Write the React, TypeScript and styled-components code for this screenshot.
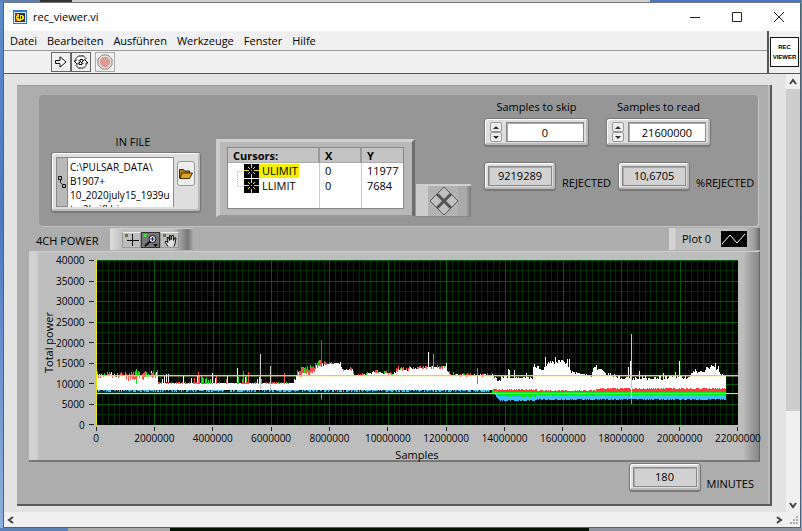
import React from "react";
import styled, { createGlobalStyle } from "styled-components";

const GlobalStyle = createGlobalStyle`
  * { box-sizing: border-box; }
  body { margin: 0; font-family: "Open Sans", "Noto Sans", sans-serif; font-size: 11px; line-height: 14px; color: #000; }
  button, input, textarea { font: inherit; color: inherit; margin: 0; padding: 0; border: 0; border-radius: 0; background: none; }
`;

const Desktop = styled.div`
  display: flex;
  flex-direction: column;
  min-height: 100vh;
  padding: 2px 1px 0 3px;
  background:
    linear-gradient(90deg, #5b81bb 0 5%, #333 5% 9%, #d0d0d0 9% 81%, #4a78c0 81%) 0 0 / 100% 2px no-repeat,
    linear-gradient(#5f8ccb, #4a78c0 40%, #8fb0da);
`;
const Window = styled.main`
  display: flex;
  flex-direction: column;
  flex: 1;
  background: #f0f0f0;
  border: 1px solid #55606e;
  border-top-color: #777;
`;
const Behind = styled.div`
  display: grid;
  grid-template-columns: 68px 102px 1fr 213px;
  height: 3px;
  margin: 0 -1px 0 -3px;
  & > :nth-child(1) { background: #5b81bb; }
  & > :nth-child(2) { background: #aaa; }
  & > :nth-child(3) { background: #031203; }
  & > :nth-child(4) { background: #8d93a0; }
`;
const TitleBar = styled.header`
  display: flex;
  align-items: center;
  height: 28px;
  padding-left: 9px;
  background: #fff;
`;
const Title = styled.h1`
  flex: 1;
  margin: 0 0 0 6px;
  font-size: 11px;
  font-weight: 400;
`;
const Caption = styled.button`
  display: grid;
  place-items: center;
  width: 42px;
  height: 28px;
`;
const Bars = styled.div`
  display: flex;
  border-bottom: 1px solid #555;
`;
const BarStack = styled.div`
  flex: 1;
`;
const MenuBar = styled.nav`
  display: flex;
  align-items: center;
  gap: 10px;
  height: 20px;
  padding-left: 6px;
  border-bottom: 1px solid #999;
`;
const MenuItem = styled.button`
  line-height: 16px;
`;
const Toolbar = styled.div`
  display: flex;
  align-items: center;
  height: 22px;
  padding-left: 47px;
`;
const ToolButton = styled.button<{ $faded?: boolean }>`
  display: grid;
  place-items: center;
  width: 20px;
  height: 20px;
  border: 1px solid ${(p) => (p.$faded ? "#aaa" : "#666")};
  margin-left: ${(p) => (p.$faded ? "4px" : "0")};
  & + & { border-left-width: ${(p) => (p.$faded ? "1px" : "0")}; }
`;
const IconPane = styled.div`
  display: grid;
  place-items: center;
  width: 33px;
  border-left: 2px solid #555;
`;
const ViIcon = styled.div`
  display: flex;
  flex-direction: column;
  align-items: center;
  width: 29px;
  height: 30px;
  padding-top: 4px;
  border: 1px solid #111;
  background: #fff;
  font: bold 6px/10px "Liberation Sans", sans-serif;
`;
const Viewport = styled.div`
  display: flex;
  flex: 1;
`;
const Page = styled.div`
  display: flex;
  flex: 1;
  min-width: 0;
  padding: 11px 14px 6px 13px;
  background: #e3e3e3;
`;
const FrontPanel = styled.section`
  flex: 1;
  min-width: 0;
  padding: 10px 10px 9px 12px;
  background: #adadad;
  border: solid #5c585c;
  border-width: 0 2px 2px 0;
  box-shadow: inset -2px 0 #bbb, inset 0 1px #999;
`;
const Group = styled.section`
  display: flex;
  align-items: flex-end;
  height: 131px;
  margin: 0 2px 0 10px;
  padding: 0 0 9px 12px;
  border-radius: 4px;
  background: #969696;
  box-shadow: 1px 1px #c2c2c2;
`;
const Bezel = styled.div`
  display: flex;
  background: #dedede;
  border: 1px solid #777;
  border-radius: 3px;
  box-shadow: inset 1px 1px #fff, inset -2px -2px #bbb, 0 1px 1px #777;
`;
const FileColumn = styled.div`
  display: flex;
  flex-direction: column;
  width: 150px;
  margin-bottom: 5px;
`;
const FieldLabel = styled.label`
  text-align: center;
`;
const FileLabel = styled(FieldLabel)`
  padding-left: 14px;
`;
const FileBezel = styled(Bezel)`
  height: 60px;
  margin-top: 3px;
  padding: 4px;
`;
const PathGrip = styled.span`
  display: grid;
  place-items: center;
  width: 12px;
  border: 1px solid #888;
  background: #b9b9b9;
`;
const PathBox = styled.textarea`
  width: 106px;
  height: 50px;
  padding: 2px 0 0 2px;
  border: solid #888;
  border-width: 1px 1px 0 0;
  background: #fff;
  font-size: 10px;
  white-space: pre;
  resize: none;
  overflow: hidden;
`;
const Browse = styled.button`
  display: grid;
  place-items: center;
  width: 18px;
  height: 25px;
  margin: 4px 0 0 3px;
  border: 1px solid #999;
  border-radius: 3px;
  background: #eee;
`;
const Legend = styled.div`
  width: 199px;
  height: 78px;
  margin-left: 15px;
  padding: 5px 8px 6px 7px;
  background: #b8b8b8;
  border: solid;
  border-width: 3px 3px 2px 4px;
  border-color: #d0d0d0 #6c6c6c #9a9a9a #cdcdcd;
`;
const CursorTable = styled.table`
  width: 100%;
  height: 61px;
  border-spacing: 0;
  table-layout: fixed;
  background: #fff;
  border: 1px solid #888;
  th {
    height: 15px;
    padding: 0 0 0 5px;
    text-align: left;
    background: #c4c4c4;
    border-right: 2px solid #999;
    border-bottom: 1px solid #aaa;
    line-height: 13px;
  }
  td { height: 15px; padding: 0 0 0 5px; line-height: 14px; border-right: 1px solid #ccc; }
  td:last-child, th:last-child { border-right: 0; }
  td:first-child { padding-left: 8px; }
`;
const CursorName = styled.div<{ $selected?: boolean }>`
  display: flex;
  align-items: center;
  height: 14px;
  span { padding: 0 1px 0 3px; background: ${(p) => (p.$selected ? "#f4f000" : "none")}; }
`;
const Mover = styled.button`
  display: grid;
  place-items: center;
  width: 55px;
  height: 33px;
  margin-left: 1px;
  background: linear-gradient(90deg, #ccc 0 12px, #b2b2b2 12px 42px, #aaa 42px 50px, #777);
  border-top: 2px solid #d0d0d0;
  border-bottom: 1px solid #888;
`;
const Numbers = styled.div`
  display: flex;
  flex-direction: column;
  gap: 16px;
  margin: 0 0 27px 13px;
`;
const NumberRow = styled.div<{ $gap: number }>`
  display: flex;
  gap: ${(p) => p.$gap}px;
`;
const NumberField = styled.div`
  display: flex;
  flex-direction: column;
  gap: 4px;
  width: 105px;
`;
const NumberBezel = styled(Bezel)`
  height: 28px;
  padding: 3px 4px;
  align-items: center;
`;
const Spinner = styled.div`
  display: flex;
  flex-direction: column;
  width: 12px;
  margin: 0 4px 0 1px;
`;
const SpinButton = styled.button`
  display: grid;
  place-items: center;
  width: 12px;
  height: 10px;
  border: 1px solid #999;
  border-radius: 2px;
  background: #eee;
`;
const NumberInput = styled.input`
  flex: 1;
  min-width: 0;
  height: 20px;
  border: 1px solid #888;
  box-shadow: inset 1px 1px #aaa;
  background: #fff;
  text-align: center;
`;
const Labelled = styled.div`
  display: flex;
  align-items: flex-end;
  gap: 6px;
`;
const ReadBezel = styled(Bezel)`
  width: 72px;
  height: 28px;
  padding: 3px;
`;
const ReadValue = styled.output`
  flex: 1;
  border: 1px solid #888;
  box-shadow: inset 1px 1px #aaa;
  background: #d2d2d2;
  line-height: 18px;
  text-align: center;
`;
const GraphHeader = styled.div`
  display: flex;
  align-items: flex-end;
  height: 24px;
  padding-left: 7px;
`;
const TitleSlot = styled.div`
  width: 74px;
`;
const GraphTitle = styled.h2`
  margin: 0;
  font-size: 11px;
  font-weight: 400;
  line-height: 18px;
`;
const Palette = styled.div`
  display: flex;
  width: 83px;
  height: 22px;
  margin-right: auto;
  padding: 3px 0 0 12px;
  background: linear-gradient(90deg, #ddd, #c0c0c0 12px 64px, #777 78px, #aaa);
  border-top: 1px solid #ccc;
`;
const PaletteButton = styled.button<{ $active?: boolean }>`
  display: grid;
  place-items: center;
  width: 19px;
  height: 16px;
  border: 1px solid ${(p) => (p.$active ? "#333" : "#999")};
  border-top-color: ${(p) => (p.$active ? "#333" : "#eee")};
  background: ${(p) => (p.$active ? "#777" : "#bebebe")};
`;
const PlotLegend = styled.div`
  display: flex;
  align-items: center;
  gap: 10px;
  width: 91px;
  height: 22px;
  padding-left: 13px;
  background: linear-gradient(90deg, #d4d4d4 6px, #bfbfbf 7px 76px, #999 86px, #666);
`;
const Graph = styled.div`
  display: grid;
  grid-template-columns: 13px 42px 12px 1fr;
  grid-template-rows: 165px 35px;
  margin-top: 1px;
  padding: 8px 21px 0 0;
  border: solid;
  border-width: 1px 1px 2px 0;
  border-color: #d0d0d0 #666 #777 #ccc;
  background: linear-gradient(90deg, #d2d2d2 0 7px, #bdbdbd 11px, #bdbdbd calc(100% - 16px), #929292 calc(100% - 4px), #888);
`;
const YAxis = styled.div`
  grid-column: 2;
  display: grid;
  grid-template-columns: 14px 1fr;
`;
const YTitle = styled.div`
  writing-mode: vertical-rl;
  transform: rotate(180deg);
  text-align: center;
  line-height: 14px;
  justify-self: end;
`;
const YLabels = styled.div`
  display: flex;
  flex-direction: column;
  justify-content: space-between;
  align-items: flex-end;
  font-size: 10px;
  span { display: flex; align-items: center; height: 0; }
`;
const YMarks = styled.div`
  display: flex;
  flex-direction: column;
  justify-content: space-between;
  align-items: flex-end;
  padding-right: 2px;
  span { width: 5px; height: 1px; background: #222; }
`;
const XAxis = styled.div`
  grid-column: 4;
`;
const XLabels = styled.div`
  display: flex;
  justify-content: space-between;
  height: 23px;
  padding-top: 2px;
  font-size: 10px;
  span { display: flex; flex-direction: column; align-items: center; width: 0; }
  span::before { content: ""; width: 1px; height: 4px; flex: none; background: #222; }
`;
const XTitle = styled.div`
  text-align: center;
  line-height: 14px;
`;
const PlotArea = styled.svg`
  display: block;
  width: 100%;
  height: 165px;
  background: #000;
`;
const Footer = styled.div`
  display: flex;
  justify-content: flex-end;
  padding: 1px 6px 0 0;
`;
const VScroll = styled.div`
  display: flex;
  flex-direction: column;
  justify-content: space-between;
  width: 14px;
  background: #f0f0f0;
`;
const VThumb = styled.div`
  width: 14px;
  height: 322px;
  margin-bottom: auto;
  background: #cdcdcd;
`;
const HScroll = styled.div`
  display: flex;
  align-items: center;
  justify-content: space-between;
  height: 15px;
  background: #f0f0f0;
`;
const ScrollButton = styled.button`
  display: grid;
  place-items: center;
  width: 14px;
  height: 15px;
`;
const HEnd = styled.div`
  display: flex;
`;

function noise(seed: number) {
  let s = seed;
  return () => {
    s = (s * 16807) % 2147483647;
    return s / 2147483647;
  };
}

type Knot = [x: number, y: number, jitter: number];
const envelope: Knot[] = [
  [0, 115, 2], [40, 116, 2], [61, 114, 2], [62, 123, 0], [197, 123, 0], [201, 113, 2],
  [214, 110, 2], [222, 105, 2], [236, 103, 2], [244, 103, 1], [246, 110, 1], [256, 110, 1],
  [258, 115, 0], [266, 115, 0], [278, 112, 1], [296, 114, 1], [301, 110, 2], [315, 109, 2],
  [330, 107, 1], [349, 107, 1], [354, 115, 1], [396, 115, 1], [402, 119, 2], [410, 117, 2],
  [436, 118, 1], [437, 106, 2], [446, 108, 2], [451, 102, 3], [470, 102, 2], [475, 112, 2],
  [490, 115, 1], [495, 116, 1], [498, 107, 3], [504, 108, 3], [510, 114, 1], [524, 118, 2],
  [593, 118, 2], [598, 111, 2], [608, 111, 2], [614, 107, 3], [622, 107, 4], [624, 115, 1], [630, 116, 2],
];
const whiteSpikes: Record<number, number> = {
  0: 110, 15: 112, 55: 111, 66: 119, 68: 115, 70: 114, 72: 114, 87: 115, 95: 118, 101: 116, 116: 113, 119: 118,
  131: 115, 141: 108, 147: 115, 149: 117, 152: 116, 161: 119, 163: 117, 174: 106, 188: 115, 332: 92, 337: 100, 350: 103,
  381: 108, 412: 109, 413: 110, 418: 110, 430: 113, 471: 99, 473: 99, 532: 107, 535: 74, 534: 101, 543: 111,
  567: 113, 579: 112, 583: 101, 449: 97, 459: 97, 619: 103, 401: 121, 404: 121,
};

const rand = noise(4211);
const level = (knots: Knot[], x: number) => {
  const i = Math.max(1, knots.findIndex((k) => k[0] >= x));
  const [x0, y0] = knots[i - 1];
  const [x1, y1, j] = knots[i];
  return y0 + ((y1 - y0) * (x - x0)) / (x1 - x0) + (rand() - 0.5) * 2 * j;
};
const bar = (x: number, top: number, bottom: number) =>
  `M${x} ${Math.round(top)}h1V${Math.round(bottom)}h-1z`;

let white = "";
let red = "";
let green = "";
let cyan = "";
let lowRed = "";
let lowGreen = "";
let lowCyan = "";
for (let x = 0; x < 630; x++) {
  const y = level(envelope, x);
  const top = whiteSpikes[x] ?? y;
  white += bar(x, top, x > 396 ? 131 : 130);
  if (x < 396) {
    const busy = (x > 28 && x < 62) || (x > 200 && x < 225);
    const quiet = x > 62 && x < 197;
    if (rand() < (busy ? 0.7 : 0.3)) red += bar(x, y - (busy ? 2 : 1) * rand() - (quiet ? 0 : 1), y + (busy ? 3 : 1));
    if (rand() < (busy ? 0.4 : 0.15)) green += bar(x, y - (busy ? 4 : 1) * rand() - (quiet ? 0 : 1), y + 1);
    if (rand() < 0.7) cyan += bar(x, 130, rand() < 0.5 ? 131 : 132);
  } else {
    const t = Math.min(1, (x - 396) / 7);
    const r = x > 500 ? 128 : 129 + (x > 440 && x < 500 ? 1 : 0);
    lowRed += bar(x, r + Math.round(rand()), 132);
    lowGreen += bar(x, 132 - (1 - t) * 2, 132 + t * (x < 440 ? 4 : 3) + rand());
    lowCyan += bar(x, 132, 131 + t * (x < 440 ? 9 : 8) + rand());
  }
}
for (const [x, y] of [[98, 118], [102, 112], [103, 115], [105, 116], [107, 118], [120, 115], [130, 119], [147, 111], [152, 112], [188, 113], [381, 108]])
  red += bar(x, y, 124);
for (const [x, y] of [[40, 109], [106, 117], [109, 119], [110, 118], [112, 120], [114, 119], [146, 119], [150, 115], [142, 117], [165, 119]])
  green += bar(x, y, 124);
green += bar(337, 94, 106);

const majorX = Array.from({ length: 12 }, (_, i) => Math.round((i * 642) / 11));
const minorX = Array.from({ length: 110 }, (_, i) => Math.round((i * 642) / 110));
const majorY = Array.from({ length: 8 }, (_, i) => Math.round((i * 165) / 8));
const minorY = majorY.map((y) => y + 10);
const vLines = (xs: number[]) => xs.map((x) => `M${x} 0h1v165h-1z`).join("");
const hLines = (ys: number[]) => ys.map((y) => `M0 ${y}h642v1H0z`).join("");

const Waveform = () => (
  <PlotArea viewBox="0 0 642 165" preserveAspectRatio="none" shapeRendering="crispEdges" role="img" aria-label="Total power by sample">
    <path d={vLines(minorX) + hLines(minorY)} fill="#002c00" />
    <path d={vLines(majorX) + hLines(majorY)} fill="#005a0a" />
    <path d="M225 80h1v60h-1z" fill="#18a020" />
    <path d={white} fill="#fff" />
    <path d={green} fill="#18e818" />
    <path d={red} fill="#ff4848" />
    <path d="M164 94h1v36h-1zM174 106h1v24h-1zM535 74h1v60h-1z" fill="#c4ccc4" />
    <path d="M0 131h396v2H0z" fill="#10302c" />
    <path d={cyan + "M225 133h1v5h-1z"} fill="#42c0f4" />
    <path d={lowRed} fill="#ff3c3c" />
    <path d={lowCyan} fill="#38c0ff" />
    <path d={lowGreen + "M535 136h1v8h-1z"} fill="#00ee10" />
    <path d="M535 128h1v10h-1z" fill="#e8f0d0" />
    <path d="M0 115h642v1H0z" fill="#e0d820" />
    <path d="M0 116h642v1H0z" fill="#e8e480" opacity=".4" />
    <path d="M0 133h642v1H0zM0 0h1v165h-1z" fill="#e8e800" />
  </PlotArea>
);

const AppLogo = () => (
  <svg width="14" height="14" viewBox="0 0 14 14" shapeRendering="crispEdges">
    <path fill="#2a7bd0" d="M0 0h14v14H0z" />
    <path fill="#d8ecff" d="M1 2h12v11H1z" />
    <path fill="#334" d="M2 3h10v9H2z" />
    <path fill="#f4e020" d="M3 4h3v1h4v1h1v3h-1v1H8v1H3z" />
    <path fill="#d02818" d="M2 4h2v2H2zM4 7h3v1H4zM2 9h2v2H2z" />
    <path fill="#222" d="M6 5h1v4H6zM8 6h1v3H8z" />
  </svg>
);
const Chevron = ({ d }: { d: string }) => (
  <svg width="8" height="8" viewBox="0 0 8 8" fill="none" stroke="#444" strokeWidth="2"><path d={d} /></svg>
);
const CursorGlyph = () => (
  <svg width="15" height="14" viewBox="0 0 15 14" shapeRendering="crispEdges">
    <path fill="#000" d="M0 0h15v14H0z" />
    <path fill="#f4e400" d="M7 0h1v4H7zM7 10h1v4H7zM0 6h5v1H0zM10 6h5v1h-5zM5 4h1v1H5zM9 4h1v1H9zM5 8h1v1H5zM9 8h1v1H9zM4 3h1v1H4zM10 3h1v1h-1zM4 9h1v1H4zM10 9h1v1h-1zM7 6h1v1H7z" />
  </svg>
);
const Tree = ({ last }: { last?: boolean }) => (
  <svg width="8" height="14" viewBox="0 0 8 14" fill="none" stroke="#bbb" strokeDasharray="1 1" shapeRendering="crispEdges">
    <path d={last ? "M1.5 0V7.5H8" : "M8 7.5H1.5V14"} />
  </svg>
);

const Readout = ({ id, value, label }: { id: string; value: string; label: string }) => (
  <Labelled>
    <ReadBezel><ReadValue id={id}>{value}</ReadValue></ReadBezel>
    <label htmlFor={id}>{label}</label>
  </Labelled>
);
const NumberControl = ({ id, value, label }: { id: string; value: string; label: string }) => (
  <NumberField>
    <FieldLabel htmlFor={id}>{label}</FieldLabel>
    <NumberBezel>
      <Spinner>
        <SpinButton aria-label={`Increase ${label}`}><svg width="6" height="3" viewBox="0 0 6 3"><path d="M0 3 3 0l3 3z" fill="#333" /></svg></SpinButton>
        <SpinButton aria-label={`Decrease ${label}`}><svg width="6" height="3" viewBox="0 0 6 3"><path d="M0 0h6L3 3z" fill="#333" /></svg></SpinButton>
      </Spinner>
      <NumberInput id={id} defaultValue={value} inputMode="numeric" />
    </NumberBezel>
  </NumberField>
);

const menus = ["Datei", "Bearbeiten", "Ausführen", "Werkzeuge", "Fenster", "Hilfe"];
const cursors = [
  { name: "ULIMIT", x: "0", y: "11977" },
  { name: "LLIMIT", x: "0", y: "7684" },
];
const yTicks = [40000, 35000, 30000, 25000, 20000, 15000, 10000, 5000, 0];
const xTicks = Array.from({ length: 12 }, (_, i) => i * 2000000);

export default function App() {
  return (
    <Desktop>
      <GlobalStyle />
      <Window>
        <TitleBar>
          <AppLogo />
          <Title>rec_viewer.vi</Title>
          <Caption aria-label="Minimize"><svg width="10" height="10" stroke="#222"><path d="M0 5.5h10" /></svg></Caption>
          <Caption aria-label="Maximize"><svg width="10" height="10" fill="none" stroke="#222"><path d="M.5.5h9v9h-9z" /></svg></Caption>
          <Caption aria-label="Close"><svg width="10" height="10" stroke="#222"><path d="m0 0 10 10M10 0 0 10" /></svg></Caption>
        </TitleBar>
        <Bars>
          <BarStack>
            <MenuBar>{menus.map((m) => <MenuItem key={m}>{m}</MenuItem>)}</MenuBar>
            <Toolbar>
              <ToolButton aria-label="Run">
                <svg width="12" height="12" viewBox="0 0 12 12" fill="#fff" stroke="#111"><path d="M.5 4.5H5V.8L11 6l-6 5.2V7.5H.5z" /></svg>
              </ToolButton>
              <ToolButton aria-label="Run continuously">
                <svg width="16" height="14" viewBox="0 0 16 14" fill="#fff" stroke="#111">
                  <path d="M3 6V3.500L5.500 1H10V.5L13 3.500l-3 3V4.500H7L6 5.500V6h2L4.500 9.500 1 6z" />
                  <path d="M13 8v2.500L10.500 13H6v.5l-3-3 3-3v2h3l1-1V8H8l3.500-3.500L15 8z" />
                </svg>
              </ToolButton>
              <ToolButton $faded aria-label="Abort">
                <svg width="16" height="16" viewBox="0 0 16 16"><path d="M5 1h6l4 4v6l-4 4H5l-4-4V5z" fill="#ddd" stroke="#888" /><path d="M6 3h4l3 3v4l-3 3H6l-3-3V6z" fill="#e09a94" /></svg>
              </ToolButton>
            </Toolbar>
          </BarStack>
          <IconPane><ViIcon><span>REC</span><span>VIEWER</span></ViIcon></IconPane>
        </Bars>
        <Viewport>
          <Page>
            <FrontPanel>
              <Group>
                <FileColumn>
                  <FileLabel htmlFor="in-file">IN FILE</FileLabel>
                  <FileBezel>
                    <PathGrip>
                      <svg width="8" height="12" viewBox="0 0 8 12" fill="none" stroke="#111"><path d="M.5.5h3v3h-3zM4.500 8.500h3v3h-3zM2.500 3.500v3l2 2" /></svg>
                    </PathGrip>
                    <PathBox id="in-file" defaultValue={"C:\\PULSAR_DATA\\\nB1907+\n10_2020july15_1939u\ntc_2kejfl.bin"} />
                    <Browse aria-label="Browse">
                      <svg width="14" height="11" viewBox="0 0 14 11" stroke="#3a2a00"><path d="M.5 10V1.500h4l1 1.500h5v2" fill="#b07c10" /><path d="M.8 10.500 3.500 5h10l-3 5.500z" fill="#e0a420" /></svg>
                    </Browse>
                  </FileBezel>
                </FileColumn>
                <Legend>
                  <CursorTable>
                    <colgroup><col /><col width="42" /><col width="41" /></colgroup>
                    <thead><tr><th>Cursors:</th><th>X</th><th>Y</th></tr></thead>
                    <tbody>
                      {cursors.map((c, i) => (
                        <tr key={c.name}>
                          <td><CursorName $selected={i === 0}><Tree last={i > 0} /><CursorGlyph /><span>{c.name}</span></CursorName></td>
                          <td>{c.x}</td>
                          <td>{c.y}</td>
                        </tr>
                      ))}
                      <tr><td /><td /><td /></tr>
                    </tbody>
                  </CursorTable>
                </Legend>
                <Mover aria-label="Move cursor">
                  <svg width="30" height="30" viewBox="0 0 30 30" fill="#c0c0c0" stroke="#555">
                    <path d="M15 1 29 15 15 29 1 15z" />
                    <path d="m8 8 14 14m0-14L8 22" strokeWidth="3" />
                  </svg>
                </Mover>
                <Numbers>
                  <NumberRow $gap={17}>
                    <NumberControl id="skip" label="Samples to skip" value="0" />
                    <NumberControl id="read" label="Samples to read" value="21600000" />
                  </NumberRow>
                  <NumberRow $gap={7}>
                    <Readout id="rejected" value="9219289" label="REJECTED" />
                    <Readout id="percent" value="10,6705" label="%REJECTED" />
                  </NumberRow>
                </Numbers>
              </Group>
              <GraphHeader>
                <TitleSlot><GraphTitle>4CH POWER</GraphTitle></TitleSlot>
                <Palette>
                  <PaletteButton aria-label="Cursor tool">
                    <svg width="14" height="12" viewBox="0 0 14 12" stroke="#111"><path d="M7.500 0v12M2 6.500h12" /><path d="M0 1.500h3" stroke="#5a7a4a" strokeWidth="3" /></svg>
                  </PaletteButton>
                  <PaletteButton $active aria-label="Zoom tool">
                    <svg width="15" height="13" viewBox="0 0 15 13" fill="none" stroke="#111"><circle cx="9.500" cy="5" r="3.500" fill="#dde" /><path d="M7.500 5h4M9.500 3v4" stroke="#225" /><path d="M7 7.500 2 12" strokeWidth="2" /><path d="M0 0h4L2 4z" fill="#3e3" stroke="none" /><path d="M10 10h5l-2.500 3z" fill="#111" stroke="none" /></svg>
                  </PaletteButton>
                  <PaletteButton aria-label="Pan tool">
                    <svg width="14" height="13" viewBox="0 0 14 13" fill="#ddd" stroke="#111"><path d="M5 12.500 2 8l1-1 2 1.500-1-5h1.500l1 3V1.500H8V6l1-4.500h1.500V6.500l1.500-3 1 .5-1 5.500-1 3" /><path d="M0 1.500h3" stroke="#5a7a4a" strokeWidth="3" /></svg>
                  </PaletteButton>
                </Palette>
                <PlotLegend>
                  Plot 0
                  <svg width="26" height="16" viewBox="0 0 26 16"><path d="M0 0h26v16H0z" /><path d="m1 13 8-9 7 8 8-9" fill="none" stroke="#fff" /></svg>
                </PlotLegend>
              </GraphHeader>
              <Graph>
                <YAxis>
                  <YTitle>Total power</YTitle>
                  <YLabels>{yTicks.map((t) => <span key={t}>{t}</span>)}</YLabels>
                </YAxis>
                <YMarks>{yTicks.map((t) => <span key={t} />)}</YMarks>
                <Waveform />
                <XAxis>
                  <XLabels>{xTicks.map((t) => <span key={t}>{t}</span>)}</XLabels>
                  <XTitle>Samples</XTitle>
                </XAxis>
              </Graph>
              <Footer><Readout id="minutes" value="180" label="MINUTES" /></Footer>
            </FrontPanel>
          </Page>
          <VScroll>
            <ScrollButton aria-label="Scroll up"><Chevron d="m1 6 3-4 3 4" /></ScrollButton>
            <VThumb />
            <ScrollButton aria-label="Scroll down"><Chevron d="m1 2 3 4 3-4" /></ScrollButton>
          </VScroll>
        </Viewport>
        <HScroll>
          <ScrollButton aria-label="Scroll left"><Chevron d="M6 1 2 4l4 3" /></ScrollButton>
          <HEnd>
            <ScrollButton aria-label="Scroll right"><Chevron d="m2 1 4 3-4 3" /></ScrollButton>
            <svg width="14" height="15" fill="#aaa"><path d="M10 4h2v2h-2zM7 7h2v2H7zM10 7h2v2h-2zM4 10h2v2H4zM7 10h2v2H7zM10 10h2v2h-2z" /></svg>
          </HEnd>
        </HScroll>
      </Window>
      <Behind><span /><span /><span /><span /></Behind>
    </Desktop>
  );
}
